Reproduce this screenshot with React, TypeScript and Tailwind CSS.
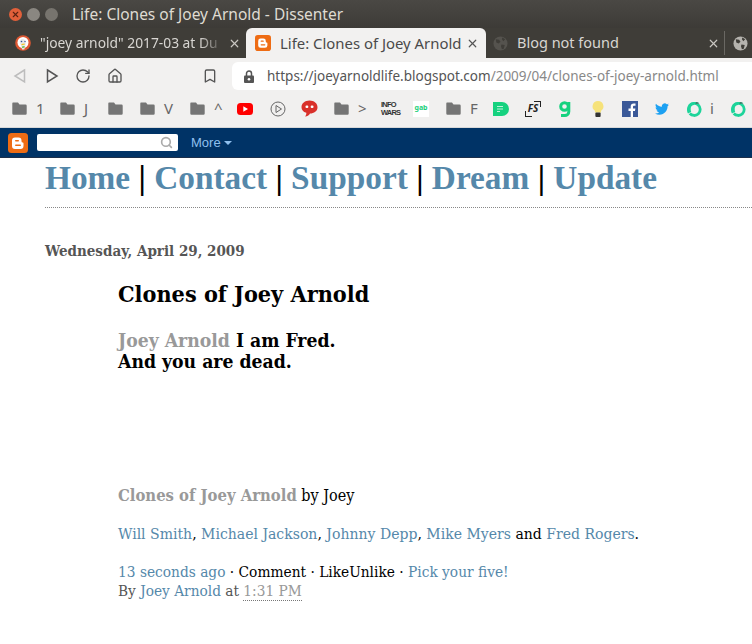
import React from "react";
import { Home, RotateCw, Search, X, Bookmark } from "lucide-react";

const Folder = () => (
  <svg width="15" height="13" viewBox="0 0 15 13" className="shrink-0">
    <path d="M1 0.5h5l1.500 2H13.500a1.200 1.200 0 0 1 1.200 1.200V11.500a1.200 1.200 0 0 1-1.200 1.200H1.500A1.200 1.200 0 0 1 .3 11.500V1.500A1 1 0 0 1 1 .5z" fill="#757575" />
  </svg>
);

const BloggerIcon = ({ size }: { size: number }) => (
  <svg width={size} height={size} viewBox="0 0 20 20" className="shrink-0">
    <rect width="20" height="20" rx="3.500" fill="#ee6c14" />
    <path d="M7 4.500h3.500a3 3 0 0 1 3 3v.8a1.300 1.300 0 0 0 1.300 1.200 1 1 0 0 1 .7 1v2.500a3 3 0 0 1-3 3H7a3 3 0 0 1-3-3v-5.500a3 3 0 0 1 3-3z" fill="#fff" />
    <rect x="7" y="7" width="4" height="1.500" rx=".75" fill="#ee6c14" />
    <rect x="7" y="11.500" width="6" height="1.500" rx=".75" fill="#ee6c14" />
  </svg>
);

const Globe = ({ color }: { color: string }) => (
  <svg width="15" height="15" viewBox="0 0 16 16" className="shrink-0">
    <circle cx="8" cy="8" r="7.500" fill={color} />
    <path d="M3 3.500l3.500.5 1.500 2-2 2-2.500-1zM9 9l3.500 .5-1 4-2 .5-1-3zM10 1.500l3 2-2 2-1.500-2z" fill="#3f3d38" />
  </svg>
);

const Duck = () => (
  <svg width="16" height="16" viewBox="0 0 16 16" className="shrink-0">
    <circle cx="8" cy="8" r="7.800" fill="#de5833" />
    <circle cx="8" cy="7.500" r="5.500" fill="#fff" />
    <path d="M5 5.500c1-2 4-2 5 0 1 2 .8 4 .3 6l-1 3H7l-1-4C5 9 4.500 7 5 5.500z" fill="#e9e9e9" />
    <circle cx="6.500" cy="6.500" r=".8" fill="#2d4f8e" />
    <circle cx="10" cy="6.500" r=".7" fill="#2d4f8e" />
    <path d="M6.500 9l3-.5.5 1-3.500 .8z" fill="#f5c518" />
    <path d="M7 11.500l2.500-.5.200 1.500-2.500 .5z" fill="#65bc46" />
  </svg>
);

const YouTube = () => (
  <svg width="16" height="12" viewBox="0 0 16 12" className="shrink-0">
    <rect width="16" height="12" rx="3.500" fill="#f00" />
    <path d="M6.300 3.300v5.400L11 6z" fill="#fff" />
  </svg>
);

const PlayCircle = () => (
  <svg width="16" height="16" viewBox="0 0 16 16" className="shrink-0" fill="none" stroke="#666" strokeWidth="1">
    <circle cx="8" cy="8" r="7" />
    <path d="M6 4.500v7L11.500 8z" />
  </svg>
);

const Speech = () => (
  <svg width="17" height="17" viewBox="0 0 17 17" className="shrink-0">
    <path d="M8.500 .5c4.500 0 8 2.800 8 6.700 0 3.900-3.500 6.300-7.500 6.300-.5 1.300-2.500 3-5 3 1-1 1.500-2.200 1.300-3.700C2 11.700.5 9.800.5 7.200.5 3.300 4 .5 8.500 .5z" fill="#d9302a" />
    <rect x="4.500" y="5.500" width="2.800" height="2.500" rx="1" fill="#fff" />
    <rect x="9.700" y="5.500" width="2.800" height="2.500" rx="1" fill="#fff" />
  </svg>
);

const Minds = () => (
  <svg width="16" height="16" viewBox="0 0 16 16" className="shrink-0" fill="none">
    <path d="M4.500 3.800A6 6 0 1 1 3 11.500" stroke="#1ed49a" strokeWidth="2.800" transform="rotate(-12 8 8.500)" />
    <path d="M1 8.500c0-4 3-7.500 8-7.500 1.500 0 3 .4 4 1-3-.4-6 .6-7.500 3-1 1.600-1 4-.3 6-1.200.5-2.500 1-3.200 1.500-.8-1.200-1-2.600-1-4z" fill="#1ed49a" />
    <path d="M10 1.300c1.300 0 2.500.4 3.500 1.200-1.500-.1-2.800 0-4 .5z" fill="#4a5a56" />
  </svg>
);

const BookmarkItem = ({ icon, label, width }: { icon: React.ReactNode; label?: string; width: string }) => (
  <div className={`flex shrink-0 items-center gap-[9px] ${width}`}>
    {icon}
    {label && <span className="text-[15px] leading-none text-[#666]">{label}</span>}
  </div>
);

const Tab = ({ icon, title, width, active, text }: { icon: React.ReactNode; title: string; width: string; active?: boolean; text: string }) => (
  <div className={`flex h-[30px] shrink-0 items-center ${width} ${active ? "rounded-t-[6px] bg-[#f2f1f0] text-[#4a4a4a]" : "text-[#d8d6d2]"}`}>
    {icon}
    <span className={`ml-[9px] min-w-0 flex-1 overflow-hidden whitespace-nowrap ${text}`}>{title}</span>
    <X size={13} strokeWidth={2.200} className={`shrink-0 ${active ? "text-[#555]" : "text-[#c9c7c2]"}`} />
  </div>
);

export default function App() {
  return (
    <div className="h-[644px] w-[752px] overflow-hidden bg-white font-['Noto_Sans',sans-serif]">
      <div className="flex h-[28px] items-center bg-[linear-gradient(#4a4844,#3d3b37)] pl-[9px] pt-[1px]">
        <span className="flex h-[13px] w-[13px] items-center justify-center rounded-full bg-[#e2603a] text-[#5b2312]">
          <X size={9} strokeWidth={3} />
        </span>
        <span className="ml-[5px] h-[13px] w-[13px] rounded-full bg-[#8a8781]" />
        <span className="ml-[5px] h-[13px] w-[13px] rounded-full bg-[#77746e]" />
        <span className="ml-[14px] text-[15.500px] text-[#dfdbd2]">Life: Clones of Joey Arnold - Dissenter</span>
      </div>

      <div className="flex h-[30px] items-center bg-[#3f3d38]">
        <Tab icon={<Duck />} title={'"joey arnold" 2017-03 at Du'} width="w-[246px] pl-[15px] pr-[5px]" text="pr-[8px] text-[13.800px] [mask-image:linear-gradient(90deg,#000_85%,transparent_98%)]" />
        <Tab active icon={<BloggerIcon size={16} />} title="Life: Clones of Joey Arnold" width="w-[240px] pl-[9px] pr-[7px]" text="text-[14.900px]" />
        <Tab icon={<Globe color="#55534e" />} title="Blog not found" width="w-[238px] pl-[7px] pr-[4px]" text="text-[14.500px]" />
        <div className="flex h-[24px] flex-1 items-center border-l border-[#6a6863] pl-[8px]">
          <Globe color="#b5b3ae" />
        </div>
      </div>

      <div className="flex h-[32px] items-center bg-[#f2f1f0] pl-[13px] pt-[4px]">
        <svg width="14" height="16" viewBox="0 0 14 16" fill="none" stroke="#bdbdbd" strokeWidth="1.500"><path d="M11.500 2L2 8l9.500 6z" /></svg>
        <svg width="14" height="16" viewBox="0 0 14 16" fill="none" stroke="#555" strokeWidth="1.500" className="ml-[18px]"><path d="M2.500 2L12 8l-9.500 6z" /></svg>
        <RotateCw size={16} strokeWidth={2} className="ml-[16px] text-[#555]" />
        <Home size={16} strokeWidth={2} className="ml-[16px] text-[#555]" />
        <Bookmark size={16} strokeWidth={2} className="ml-[79px] text-[#555]" />
        <div className="ml-[14px] flex h-[28px] flex-1 items-center rounded-l-[6px] bg-white pl-[12px]">
          <svg width="10" height="13" viewBox="0 0 10 13" className="shrink-0">
            <path d="M2.500 6V3.500a2.500 2.500 0 0 1 5 0V6" fill="none" stroke="#555" strokeWidth="1.500" />
            <rect y="5.500" width="10" height="7.500" rx="1" fill="#555" />
            <circle cx="5" cy="9.200" r="1.300" fill="#fff" />
          </svg>
          <span className="ml-[13px] whitespace-nowrap text-[13.500px] text-[#555]">
            https://joeyarnoldlife.blogspot.com<span className="text-[#888]">/2009/04/clones-of-joey-arnold.html</span>
          </span>
        </div>
      </div>

      <div className="flex h-[38px] items-center overflow-hidden border-b border-[#d8d8d8] bg-[#f1f0ef] pl-[12px]">
        <BookmarkItem width="w-[48px]" icon={<Folder />} label="1" />
        <BookmarkItem width="w-[48px]" icon={<Folder />} label="J" />
        <BookmarkItem width="w-[32px]" icon={<Folder />} />
        <BookmarkItem width="w-[50px]" icon={<Folder />} label="V" />
        <BookmarkItem width="w-[47px]" icon={<Folder />} label="^" />
        <BookmarkItem width="w-[33px]" icon={<YouTube />} />
        <BookmarkItem width="w-[31px]" icon={<PlayCircle />} />
        <BookmarkItem width="w-[33px]" icon={<Speech />} />
        <BookmarkItem width="w-[47px]" icon={<Folder />} label=">" />
        <div className="flex w-[32px] shrink-0 flex-col font-['Liberation_Sans',sans-serif] text-[7.500px] font-bold leading-[8px] tracking-[-0.800px] text-[#333]">
          <span>INFO</span>
          <span>WARS</span>
        </div>
        <div className="mr-[17px] flex h-[16px] w-[16px] shrink-0 items-center justify-center bg-white text-[7px] font-bold text-[#21cf7a]">gab</div>
        <BookmarkItem width="w-[47px]" icon={<Folder />} label="F" />
        <svg width="16" height="16" viewBox="0 0 16 16" className="mr-[16px] shrink-0">
          <path d="M0 1h9a7 7 0 0 1 0 14H0z" fill="#16d27f" />
          <path d="M4 5.500h6M4 8h6M4 10.500h3" stroke="#bdf3d9" strokeWidth="1" />
        </svg>
        <div className="relative mr-[16px] flex h-[16px] w-[16px] shrink-0 items-center justify-center text-[10px] font-bold italic text-[#222]">
          <span className="absolute bottom-0 left-0 h-[6px] w-[7px] border-b border-l border-[#222]" />
          <span className="absolute right-0 top-0 h-[6px] w-[7px] border-r border-t border-[#222]" />
          FS
        </div>
        <svg width="16" height="18" viewBox="0 0 16 18" className="mr-[18px] shrink-0" fill="none" stroke="#16d27f" strokeWidth="3">
          <circle cx="7.500" cy="6.500" r="3.800" />
          <path d="M11.800 2v9.500a4 4 0 0 1-4 4H4" />
        </svg>
        <svg width="14" height="18" viewBox="0 0 16 20" className="mr-[17px] shrink-0">
          <path d="M8 1a6 6 0 0 1 3.500 11v2h-7v-2A6 6 0 0 1 8 1z" fill="#f6e27a" />
          <rect x="5" y="14" width="6" height="5" rx="1" fill="#333" />
        </svg>
        <svg width="16" height="16" viewBox="0 0 16 16" className="mr-[16px] shrink-0">
          <rect width="16" height="16" fill="#3b5998" />
          <path d="M11 16v-6h2l.4-2.500H11V6c0-.8.3-1.200 1.200-1.200h1.300V2.500c-.4-.1-1-.1-1.700-.1-2 0-3.100 1.100-3.100 3.200v1.900H6.500V10h2.200v6z" fill="#fff" />
        </svg>
        <svg width="16" height="14" viewBox="0 0 24 24" className="mr-[16px] shrink-0">
          <path d="M23.950 4.570a10 10 0 0 1-2.820.77 4.960 4.960 0 0 0 2.160-2.720 9.900 9.900 0 0 1-3.120 1.190 4.920 4.920 0 0 0-8.380 4.480C7.690 8.090 4.070 6.130 1.640 3.160a4.820 4.820 0 0 0-.67 2.480c0 1.710.87 3.210 2.190 4.100a4.900 4.900 0 0 1-2.230-.62v.06a4.920 4.920 0 0 0 3.950 4.830 5 5 0 0 1-2.210.08 4.940 4.940 0 0 0 4.600 3.420A9.870 9.870 0 0 1 0 19.540a14 14 0 0 0 7.560 2.210c9.050 0 14-7.500 14-13.980 0-.21 0-.42-.02-.63a9.940 9.940 0 0 0 2.410-2.570z" fill="#1da1f2" />
        </svg>
        <div className="flex w-[44px] shrink-0 items-center gap-[8px]">
          <Minds />
          <span className="text-[15px] leading-none text-[#666]">i</span>
        </div>
        <Minds />
      </div>

      <div className="flex h-[30px] items-center border-b border-[#1c2f4a] bg-[#003366] pl-[8px]">
        <BloggerIcon size={20} />
        <div className="ml-[9px] flex h-[17px] w-[141px] items-center justify-end rounded-[2px] bg-white pr-[5px]">
          <Search size={13} strokeWidth={3} className="text-[#aaa]" />
        </div>
        <span className="ml-[13px] font-['Liberation_Sans',sans-serif] text-[13px] text-[#8fc0ee]">More</span>
        <svg width="8" height="4" viewBox="0 0 8 4" className="ml-[3px]"><path d="M0 0h8L4 4z" fill="#8fc0ee" /></svg>
      </div>

      <div className="pl-[45px] font-['Liberation_Serif',serif]">
        <div className="border-b border-dotted border-[#888] pb-[9px] text-[33.350px] font-bold leading-[40px] text-[#5588aa]">
          Home <span className="text-black">|</span> Contact <span className="text-black">|</span> Support <span className="text-black">|</span> Dream <span className="text-black">|</span> Update
        </div>

        <div className="font-['DejaVu_Serif_Condensed','DejaVu_Serif',serif]">
          <h2 className="mt-[33px] text-[15px] font-bold leading-[20px] text-[#555]">Wednesday, April 29, 2009</h2>

          <div className="ml-[73px] mt-[18px]">
            <h1 className="text-[23.200px] font-bold leading-[30px] text-black">Clones of Joey Arnold</h1>
            <div className="mt-[21px] text-[19.200px] font-bold leading-[21px] text-black">
              <span className="text-[#999]">Joey Arnold</span> I am Fred.
              <br />
              And you are dead.
            </div>

            <div className="mt-[114px] text-[16px] leading-[20px] text-black">
              <span className="text-[16.500px] font-bold text-[#999]">Clones of Joey Arnold</span> by Joey
            </div>
            <div className="mt-[18px] whitespace-nowrap text-[15.600px] leading-[20px] text-black">
              <span className="text-[#5588aa]">Will Smith</span>, <span className="text-[#5588aa]">Michael Jackson</span>,{" "}
              <span className="text-[#5588aa]">Johnny Depp</span>, <span className="text-[#5588aa]">Mike Myers</span> and{" "}
              <span className="text-[#5588aa]">Fred Rogers</span>.
            </div>
            <div className="mt-[19px] whitespace-nowrap text-[15.300px] leading-[19px] text-black">
              <span className="text-[#5588aa]">13 seconds ago</span> · Comment · LikeUnlike · <span className="text-[#5588aa]">Pick your five!</span>
            </div>
            <div className="text-[15.250px] leading-[19px] text-[#555]">
              By <span className="text-[#5588aa]">Joey Arnold</span> at <span className="border-b border-dotted border-[#777] leading-none text-[#999]">1:31 PM</span>
            </div>
          </div>
        </div>
      </div>
    </div>
  );
}
